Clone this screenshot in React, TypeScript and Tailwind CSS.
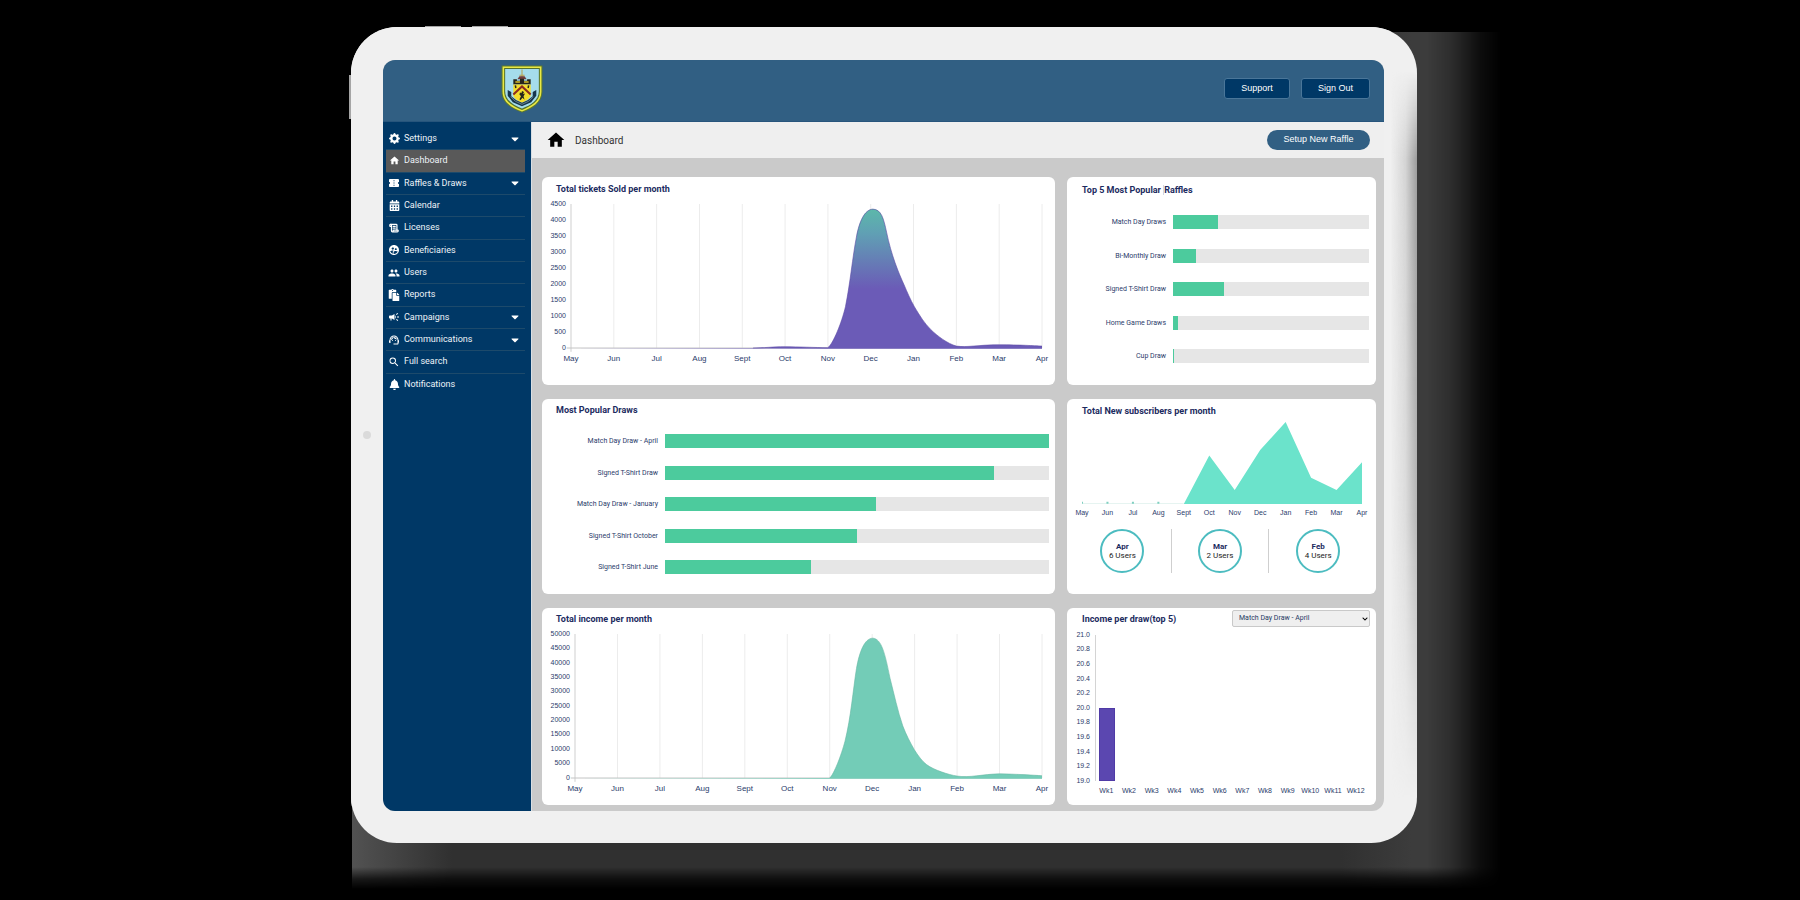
import { useState } from 'react';
import type { ReactNode } from 'react';
import type { IconType } from 'react-icons';
import {
  MdCampaign,
  MdConfirmationNumber,
  MdGroup,
  MdHome,
  MdSearch,
  MdSupervisedUserCircle,
  MdSupportAgent,
} from 'react-icons/md';
import { BsGearFill } from 'react-icons/bs';
import { FaBell, FaCalendarAlt, FaCaretDown, FaChevronDown, FaPaste } from 'react-icons/fa';
import { LuScrollText } from 'react-icons/lu';

interface NavItem {
  label: string;
  icon: IconType;
  iconClass: string;
  active?: boolean;
  expandable?: boolean;
}

const NAV: NavItem[] = [
  { label: 'Settings', icon: BsGearFill, iconClass: 'size-[11px]', expandable: true },
  { label: 'Dashboard', icon: MdHome, iconClass: 'size-[11px]', active: true },
  { label: 'Raffles & Draws', icon: MdConfirmationNumber, iconClass: 'size-[12px]', expandable: true },
  { label: 'Calendar', icon: FaCalendarAlt, iconClass: 'size-[11px]' },
  { label: 'Licenses', icon: LuScrollText, iconClass: 'size-[10px] stroke-3' },
  { label: 'Beneficiaries', icon: MdSupervisedUserCircle, iconClass: 'size-[12px]' },
  { label: 'Users', icon: MdGroup, iconClass: 'size-[12px]' },
  { label: 'Reports', icon: FaPaste, iconClass: 'size-[12px]' },
  { label: 'Campaigns', icon: MdCampaign, iconClass: 'size-[12px]', expandable: true },
  { label: 'Communications', icon: MdSupportAgent, iconClass: 'size-[12px]', expandable: true },
  { label: 'Full search', icon: MdSearch, iconClass: 'size-[12px]' },
  { label: 'Notifications', icon: FaBell, iconClass: 'size-[11px]' },
];

const MONTHS = ['May', 'Jun', 'Jul', 'Aug', 'Sept', 'Oct', 'Nov', 'Dec', 'Jan', 'Feb', 'Mar', 'Apr'];
const WEEKS = Array.from({ length: 12 }, (_, i) => `Wk${i + 1}`);

const TICKET_TICKS = ['4500', '4000', '3500', '3000', '2500', '2000', '1500', '1000', '500', '0'];
const INCOME_TICKS = ['50000', '45000', '40000', '35000', '30000', '25000', '20000', '15000', '10000', '5000', '0'];
const DRAW_TICKS = ['21.0', '20.8', '20.6', '20.4', '20.2', '20.0', '19.8', '19.6', '19.4', '19.2', '19.0'];

const TICKETS_PATH =
  'M0 450 H425 C450 450 470 446 500 446 S570 449 600 449 C612 437 632 372 641 321 C653 240 657 170 667 100 C673 58 685 17 705 16 C725 17 730 45 737 88 C748 160 765 215 778 253 C785 275 793 300 802 321 C815 350 825 372 840 392 C855 412 880 437 900 444 C925 449 950 440 1000 440 C1050 440 1080 443 1100 444';
const INCOME_PATH =
  'M0 450 H600 C610 438 627 380 636 335 C650 260 655 175 663 108 C670 55 682 14 701 13 C722 14 730 60 742 138 C752 190 760 240 772 287 C780 315 790 340 799 361 C808 380 818 398 828 408 C845 425 880 440 900 444 C930 450 960 438 1000 437 C1040 438 1080 441 1100 443';

const TOP_RAFFLES = [
  { label: 'Match Day Draws', value: 23 },
  { label: 'Bi-Monthly Draw', value: 11.5 },
  { label: 'Signed T-Shirt Draw', value: 26 },
  { label: 'Home Game Draws', value: 2.3 },
  { label: 'Cup Draw', value: 0.6 },
];

const POPULAR_DRAWS = [
  { label: 'Match Day Draw - April', value: 100 },
  { label: 'Signed T-Shirt Draw', value: 85.7 },
  { label: 'Match Day Draw - January', value: 55 },
  { label: 'Signed T-Shirt October', value: 50 },
  { label: 'Signed T-Shirt June', value: 38 },
];

const SUBSCRIBERS = [
  { month: 'Apr', users: 6 },
  { month: 'Mar', users: 2 },
  { month: 'Feb', users: 4 },
];

function Crest() {
  return (
    <svg viewBox="0 0 82 94" className="h-12 w-[42px]" role="img" aria-label="Club crest">
      <path d="M1 1H81V52C81 74 62 86 41 93C20 86 1 74 1 52Z" fill="#5f7a2c" />
      <path d="M3 3H79V52C79 73 61 84 41 91C21 84 3 73 3 52Z" fill="#e9e845" />
      <path d="M6 6H76V52C76 71 59 81 41 88C23 81 6 71 6 52Z" fill="#53722f" />
      <path d="M8 8H74V51C74 69 58 79 41 85C24 79 8 69 8 51Z" fill="#a5dcec" />
      <path d="M41 9V24M36 20H46" stroke="#b9a14b" strokeWidth="2" />
      <path d="M32 28L36 22H46L50 28Z" fill="#713c3c" />
      <path d="M24 28H31V31H37V27H45V31H51V28H58V38H24Z" fill="#27251d" />
      <path d="M28 32H37V35H28ZM45 32H54V35H45Z" fill="#d8bd28" />
      <path d="M24 38H58V60C54 68 46 71 41 74C36 71 28 68 24 60Z" fill="#f3dc2c" />
      <path d="M24 58L41 42L58 58" fill="none" stroke="#8b2b20" strokeWidth="4" />
      <path d="M28 40L29 45M54 40L53 45" stroke="#27251d" strokeWidth="3" />
      <path d="M37 54L40 55L41 51L45 53L43 57L47 56L44 61L46 68L42 64L38 69L36 67L39 61L36 58Z" fill="#27251d" />
      <path d="M13 49L20 53V61L30 69L41 74L52 69L62 61V53L69 49V60L59 73L41 81L23 73L13 60Z" fill="#17364c" />
      <path d="M19 62L28 71L41 77L54 71L63 62" fill="none" stroke="#b6ccd0" strokeWidth="1" />
    </svg>
  );
}

function Card({ className = '', children }: { className?: string; children: ReactNode }) {
  return <section className={`flex min-w-0 flex-col rounded-md bg-white ${className}`}>{children}</section>;
}

function CardTitle({ children }: { children: ReactNode }) {
  return <h2 className="text-[9px]/[10px] font-bold text-[#1c2b60]">{children}</h2>;
}

// Each label is centred on its tick, so the first and last hang over the ends
function XLabels({ labels, className }: { labels: string[]; className: string }) {
  return (
    <div className={`flex h-[10px] justify-between font-[Liberation_Sans,sans-serif] text-[#2b3c6b] ${className}`}>
      {labels.map(label => (
        <span key={label} className="flex w-0 justify-center whitespace-nowrap">{label}</span>
      ))}
    </div>
  );
}

function YLabels({ labels, className }: { labels: string[]; className: string }) {
  return (
    <div className={`flex shrink-0 flex-col justify-between text-right font-[Liberation_Sans,sans-serif] text-[7px] text-[#2b3c6b] ${className}`}>
      {labels.map(label => (
        <span key={label} className="flex h-0 items-center justify-end">{label}</span>
      ))}
    </div>
  );
}

interface AreaChartProps {
  path: string;
  ticks: string[];
  tickClass: string;
  fill: string;
  stroke: string;
}

function AreaChart({ path, ticks, tickClass, fill, stroke }: AreaChartProps) {
  return (
    <div className="mt-[10px] flex gap-[5px] pr-[13px]">
      <YLabels labels={ticks} className={`h-36 ${tickClass}`} />
      <div className="min-w-0 flex-1">
        <svg viewBox="0 0 1100 450" preserveAspectRatio="none" className="block h-36 w-full overflow-visible">
          <defs>
            <linearGradient id="ticketsFill" gradientUnits="userSpaceOnUse" x1="0" y1="16" x2="0" y2="265">
              <stop offset="0" stopColor="#5cb8aa" />
              <stop offset="0.3" stopColor="#60a0b4" />
              <stop offset="1" stopColor="#6b5bb7" />
            </linearGradient>
          </defs>
          {MONTHS.map((month, i) => (
            <line
              key={month}
              x1={i * 100}
              x2={i * 100}
              y1="0"
              y2={i === 0 ? 462 : 450}
              stroke={i === 0 ? '#cfcfcf' : '#ececec'}
              vectorEffect="non-scaling-stroke"
            />
          ))}
          <line x1="-10" x2="1100" y1="450" y2="450" stroke="#c4c4c4" vectorEffect="non-scaling-stroke" />
          <path d={`${path} V452 H600Z`} fill={fill} />
          <path
            d={path.replace(/^M0 450 H(\d+)/, 'M$1 450')}
            fill="none"
            stroke={stroke}
            strokeOpacity="0.6"
            vectorEffect="non-scaling-stroke"
          />
        </svg>
        <XLabels labels={MONTHS} className="mt-[6px] text-[8px]/[10px]" />
      </div>
    </div>
  );
}

function BarList({ rows, labelClass, className }: { rows: { label: string; value: number }[]; labelClass: string; className: string }) {
  return (
    <ul className={`flex flex-1 flex-col justify-between ${className}`}>
      {rows.map(row => (
        <li key={row.label} className="flex items-center gap-[7px]">
          <span className={`shrink-0 text-right text-[7px]/[14px] whitespace-nowrap text-[#2b3c6b] ${labelClass}`}>{row.label}</span>
          <div className="h-[14px] flex-1 bg-[#e6e6e6]">
            <div className="h-full bg-[#4ccb9d]" style={{ width: `${row.value}%` }} />
          </div>
        </li>
      ))}
    </ul>
  );
}

function Sidebar() {
  return (
    <nav className="w-[148px] shrink-0 bg-[#003866] pt-[6px] pr-[6px] pl-[3px]">
      <ul className="grid h-[268px] grid-rows-12">
        {NAV.map(({ label, icon: Icon, iconClass, active, expandable }) => (
          <li key={label} className="flex border-b border-[#1d4a6b] last:border-0">
            <a
              href="#"
              aria-current={active ? 'page' : undefined}
              className={`flex flex-1 items-center gap-1 pr-[6px] pl-[2px] text-[9px] text-[#eef3f8] ${active ? 'bg-[#595959]' : ''}`}
            >
              <span className="flex w-3 justify-center text-white">
                <Icon className={iconClass} />
              </span>
              <span className="flex-1 whitespace-nowrap">{label}</span>
              {expandable && <FaCaretDown className="h-3 w-2 text-white" />}
            </a>
          </li>
        ))}
      </ul>
    </nav>
  );
}

function IncomePerDraw() {
  const [draw, setDraw] = useState('Match Day Draw - April');

  return (
    <Card className="pt-[2px] pb-[9px]">
      <div className="flex items-center justify-between pr-[6px] pl-[15px]">
        <CardTitle>Income per draw(top 5)</CardTitle>
        <div className="relative">
          <select
            aria-label="Draw"
            value={draw}
            onChange={e => setDraw(e.target.value)}
            className="block h-[17px] w-[138px] appearance-none rounded-xs border border-[#c9c9c9] bg-[#efefef] pl-[6px] text-[7px] text-[#1f3a63]"
          >
            {POPULAR_DRAWS.map(d => (
              <option key={d.label}>{d.label}</option>
            ))}
          </select>
          <FaChevronDown className="pointer-events-none absolute top-[6px] right-[2px] size-[6px] text-black" />
        </div>
      </div>
      <div className="mt-2 flex gap-[5px] pr-[9px]">
        <YLabels labels={DRAW_TICKS} className="h-[146px] w-[23px]" />
        <div className="min-w-0 flex-1">
          <div className="grid h-[146px] grid-cols-12 border-l border-[#d4d4d4]">
            <div className="flex items-end justify-center">
              <div className="h-1/2 w-4 border border-[#4f3aa6] bg-[#5b47b0]" />
            </div>
          </div>
          <div className="mt-[5px] grid h-[10px] grid-cols-12 font-[Liberation_Sans,sans-serif] text-[7px]/[10px] text-[#2b3c6b]">
            {WEEKS.map(week => (
              <span key={week} className="text-center">{week}</span>
            ))}
          </div>
        </div>
      </div>
    </Card>
  );
}

function Subscribers() {
  return (
    <Card className="pt-[7px] pb-[21px]">
      <div className="pl-[15px]">
        <CardTitle>Total New subscribers per month</CardTitle>
      </div>
      <div className="mt-[6px] pr-[14px] pl-[15px]">
        <svg viewBox="0 0 1100 100" preserveAspectRatio="none" className="block h-[82px] w-full">
          <path d="M400 100L500 41L600 83L700 34L800 0L900 68L1000 83L1100 49V100Z" fill="#6be3cb" />
          <path d="M0 99.5H400" stroke="#e4f3f0" vectorEffect="non-scaling-stroke" />
          {[0, 100, 200, 300].map(x => (
            <path key={x} d={`M${x - 4} 98.5H${x + 4}`} stroke="#7fcfc0" strokeWidth="2" vectorEffect="non-scaling-stroke" />
          ))}
        </svg>
        <XLabels labels={MONTHS} className="mt-1 text-[7px]/[10px]" />
      </div>
      <ul className="mt-[11px] grid grid-cols-3 divide-x divide-[#cfcfcf] pr-[9px] pl-[7px]">
        {SUBSCRIBERS.map(({ month, users }) => (
          <li key={month} className="flex justify-center">
            <div className="flex size-11 flex-col items-center justify-center rounded-full border-2 border-[#4cbcc0] text-[8px]/[9px] text-[#222]">
              <b className="text-[#1c2b60]">{month}</b>
              <span>{users} Users</span>
            </div>
          </li>
        ))}
      </ul>
    </Card>
  );
}

export default function App() {
  return (
    <div className="min-h-screen overflow-hidden bg-black pt-[27px] pr-[383px] pb-[57px] pl-[351px] font-[Roboto,sans-serif]">
      <div className="relative isolate rounded-[46px] bg-[#f0f0f0] pt-[33px] pr-[33px] pb-8 pl-8">
        {/* Shadow to the right of and below the tablet */}
        <div
          aria-hidden="true"
          className="absolute top-[5px] -right-[84px] -bottom-[46px] left-px -z-20 bg-[linear-gradient(to_right,#525252,#303030_100px,#303030_calc(100%-160px),#3c3c3c_calc(100%-90px))] [clip-path:polygon(0_70%,50%_70%,50%_0,100%_0,100%_100%,0_100%)] [mask-composite:intersect] [mask-image:linear-gradient(to_right,black_calc(100%-74px),rgba(0,0,0,0.75)_calc(100%-50px),rgba(0,0,0,0.2)_calc(100%-20px),transparent),linear-gradient(to_bottom,black_calc(100%-22px),rgba(0,0,0,0.3)_calc(100%-10px),transparent)]"
        />
        <div aria-hidden="true" className="absolute inset-0 -z-10 rounded-[46px] bg-[#f0f0f0]" />
        {/* Hardware buttons, edge shading and camera */}
        <div aria-hidden="true" className="absolute -top-px left-[74px] -z-20 h-1 w-9 bg-[#a5a5a5]" />
        <div aria-hidden="true" className="absolute -top-px left-[121px] -z-20 h-1 w-9 bg-[#a5a5a5]" />
        <div aria-hidden="true" className="absolute top-12 -left-[2px] -z-20 h-11 w-1 bg-[#a5a5a5]" />
        <div
          aria-hidden="true"
          className="absolute top-11 right-0 bottom-11 w-[33px] bg-[linear-gradient(to_right,transparent_20%,#d4d4d4_65%,#9c9c9c)] [mask-image:linear-gradient(to_bottom,transparent,black_12%,rgba(0,0,0,0.7)_60%,transparent)]"
        />
        <div aria-hidden="true" className="absolute top-[404px] left-3 size-2 rounded-full bg-[#dadada]" />

        <div className="overflow-hidden rounded-xl bg-[#cacaca]">
          <header className="flex h-[62px] items-center justify-between border-b border-[#27557c] bg-[#315f83] pr-[14px] pb-1 pl-[118px]">
            <Crest />
            <div className="flex gap-[11px] font-[Liberation_Sans,sans-serif] text-[9px] text-white">
              <button type="button" className="h-[21px] w-[66px] rounded-[3px] border border-[#4a7699] bg-[#003866]">Support</button>
              <button type="button" className="h-[21px] w-[69px] rounded-[3px] border border-[#4a7699] bg-[#003866]">Sign Out</button>
            </div>
          </header>

          <div className="flex">
            <Sidebar />

            <main className="min-w-0 flex-1 border-l border-[#d9dfe4]">
              <div className="flex h-9 items-center bg-[#efefef] pr-[14px] pl-[14px]">
                <MdHome className="size-5 text-black" />
                <h1 className="ml-[9px] flex-1 text-[10px] text-[#333]">Dashboard</h1>
                <button type="button" className="h-5 w-[103px] rounded-full bg-[#315f83] font-[Liberation_Sans,sans-serif] text-[9px] text-white">
                  Setup New Raffle
                </button>
              </div>

              <div className="grid grid-cols-[513fr_309fr] gap-x-3 gap-y-[14px] pt-[19px] pr-2 pb-[6px] pl-[10px]">
                <Card className="pt-[7px] pb-[21px]">
                  <div className="pl-[14px]">
                    <CardTitle>Total tickets Sold per month</CardTitle>
                  </div>
                  <AreaChart path={TICKETS_PATH} ticks={TICKET_TICKS} tickClass="w-6" fill="url(#ticketsFill)" stroke="#5b4aa5" />
                </Card>

                <Card className="pt-2 pb-[22px]">
                  <div className="pl-[15px]">
                    <CardTitle>
                      Top 5 Most Popular <span className="border-l border-[#d4d7e2]">Raffles</span>
                    </CardTitle>
                  </div>
                  <BarList rows={TOP_RAFFLES} labelClass="w-[99px]" className="pt-5 pr-[7px]" />
                </Card>

                <Card className="pt-[6px] pb-5">
                  <div className="pl-[14px]">
                    <CardTitle>Most Popular Draws</CardTitle>
                  </div>
                  <BarList rows={POPULAR_DRAWS} labelClass="w-[116px]" className="pt-[19px] pr-[6px]" />
                </Card>

                <Subscribers />

                <Card className="pt-[6px] pb-[10px]">
                  <div className="pl-[14px]">
                    <CardTitle>Total income per month</CardTitle>
                  </div>
                  <AreaChart path={INCOME_PATH} ticks={INCOME_TICKS} tickClass="w-7" fill="#73ccb7" stroke="#66b8a4" />
                </Card>

                <IncomePerDraw />
              </div>
            </main>
          </div>
        </div>
      </div>
    </div>
  );
}
